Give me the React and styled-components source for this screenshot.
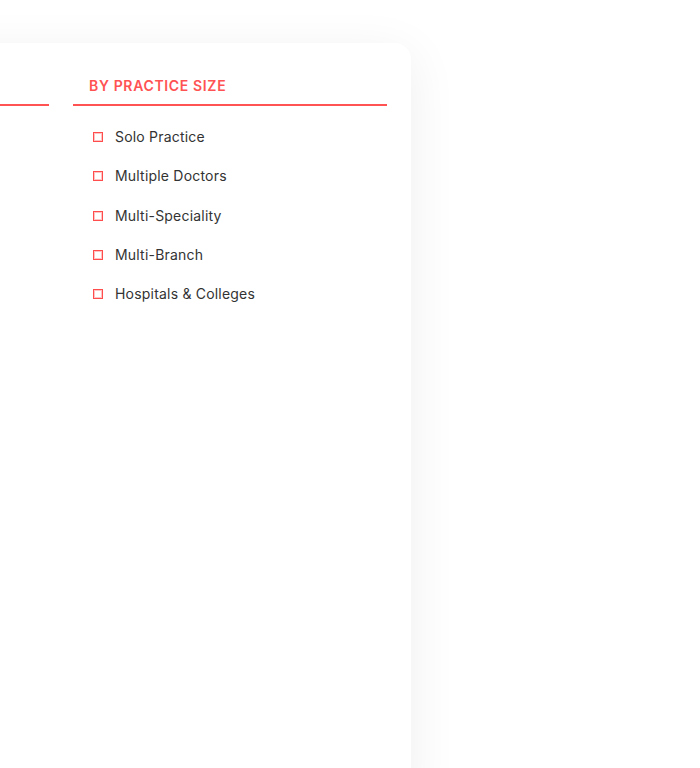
import React from "react";
import styled, { createGlobalStyle } from "styled-components";

const groups = [
  {
    id: "speciality",
    title: "",
    items: [],
  },
  {
    id: "size",
    title: "By Practice Size",
    items: [
      "Solo Practice",
      "Multiple Doctors",
      "Multi-Speciality",
      "Multi-Branch",
      "Hospitals & Colleges",
    ],
  },
];

function App() {
  return (
    <>
      <GlobalStyle />
      <Page>
        <Card>
          {groups.map((group) => (
            <Column key={group.id}>
              <Heading>{group.title}</Heading>
              <List>
                {group.items.map((item) => (
                  <Item key={item}>
                    <Box />
                    <Label>{item}</Label>
                  </Item>
                ))}
              </List>
            </Column>
          ))}
        </Card>
      </Page>
    </>
  );
}

const GlobalStyle = createGlobalStyle`
  html, body {
    margin: 0;
    padding: 0;
    overflow: hidden;
    background: #ffffff;
    font-family: Inter, "Noto Sans", sans-serif;
  }
`;

const Page = styled.div`
  height: 768px;
  overflow: hidden;
  padding-top: 43px;
  box-sizing: border-box;
`;

const Card = styled.div`
  margin-left: -289px;
  width: 700px;
  height: 760px;
  box-sizing: border-box;
  padding: 32px 24px 0;
  background: #ffffff;
  border-radius: 16px 16px 0 0;
  box-shadow: 0 10px 50px rgba(0, 0, 0, 0.07);
  display: flex;
  gap: 24px;
  align-items: flex-start;
`;

const Column = styled.div`
  width: 314px;
  flex-shrink: 0;
`;

const Heading = styled.div`
  padding: 1px 16px 8px;
  min-height: 20px;
  border-bottom: 2px solid #ff5252;
  color: #ff5252;
  font-size: 14px;
  line-height: 20px;
  font-weight: 600;
  letter-spacing: 0.65px;
  text-transform: uppercase;
`;

const List = styled.ul`
  list-style: none;
  margin: 0;
  padding: 21px 0 0 20px;
  display: flex;
  flex-direction: column;
  gap: 19.3px;
`;

const Item = styled.li`
  display: flex;
  align-items: center;
  gap: 12px;
  height: 20px;
`;

const Box = styled.span`
  width: 10px;
  height: 10px;
  box-sizing: border-box;
  border: 1px solid #ff4d4d;
  box-shadow: inset 0 0 0 1px rgba(255, 82, 82, 0.35);
  flex-shrink: 0;
`;

const Label = styled.span`
  color: #333333;
  font-size: 14px;
  line-height: 20px;
  letter-spacing: 0.2px;
`;

export default App;
